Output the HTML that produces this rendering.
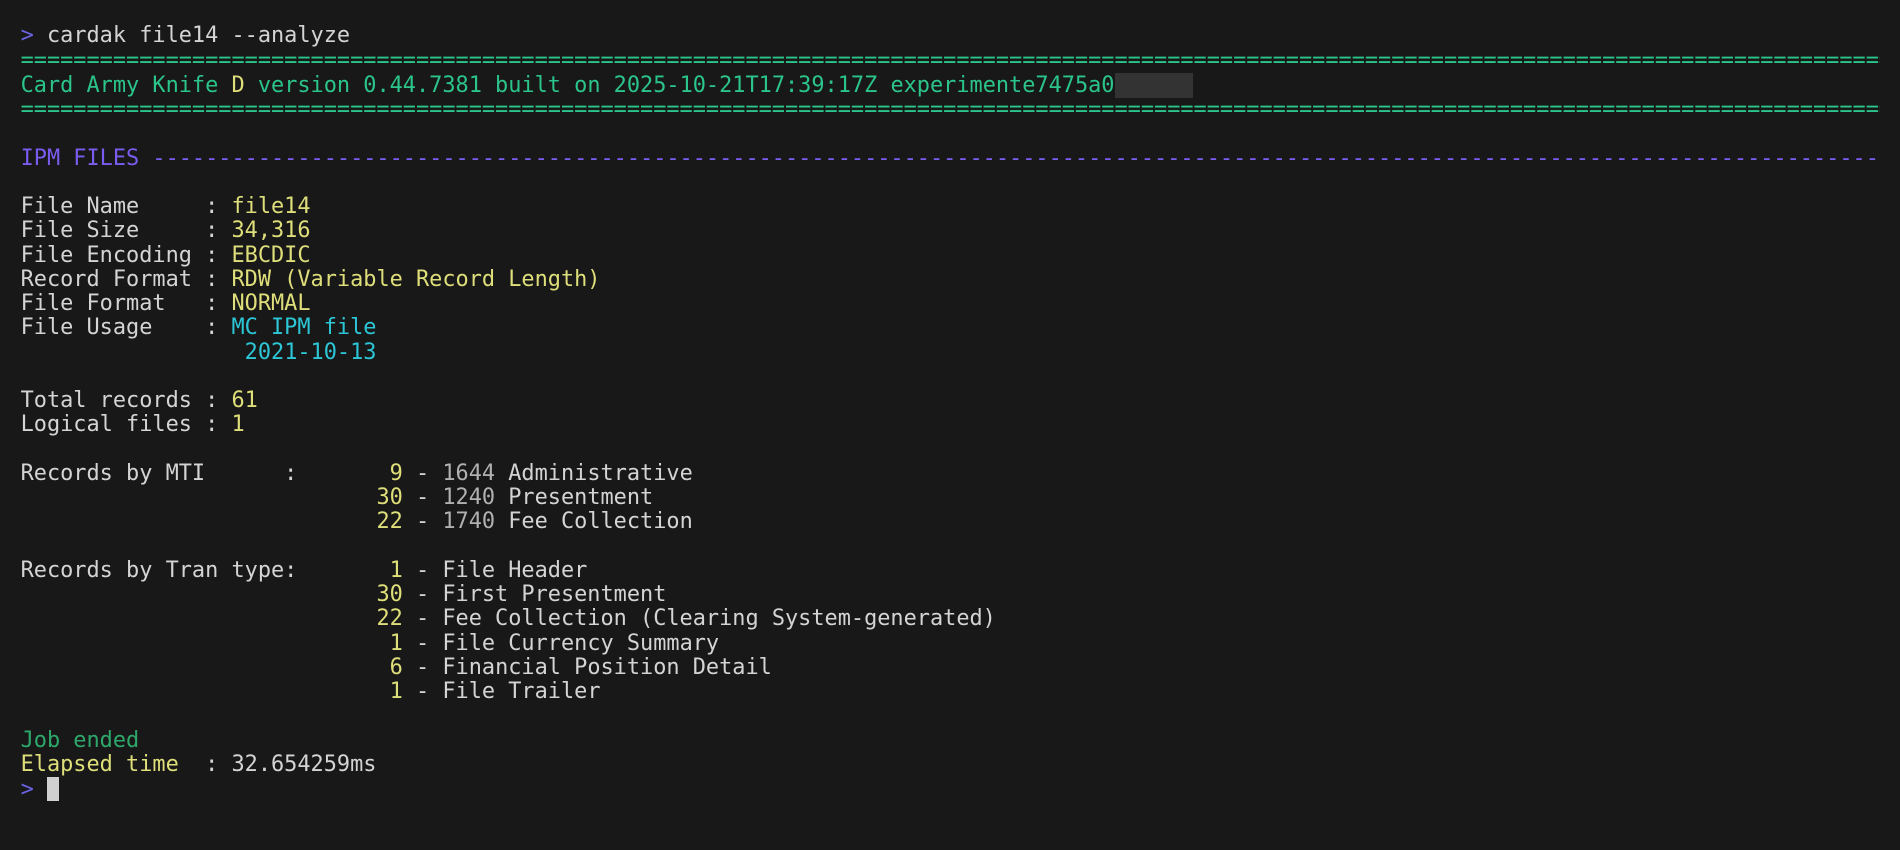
<!DOCTYPE html>
<html><head><meta charset="utf-8"><style>
html,body{margin:0;padding:0;background:#181818;width:1900px;height:850px;overflow:hidden}
pre{margin:0;padding:24.3px 0 0 20.6px;font-family:"DejaVu Sans Mono","Liberation Mono",monospace;font-size:21.9px;line-height:24.25px;color:#d4d4d4;white-space:pre}
.g{color:#2bc48a}.y{color:#dede7a}.p{color:#7b5cf0}.b{color:#6a63e6}.c{color:#2cc6d6}.gr{color:#b0b0b0}.j{color:#2ea86a}
.r{display:inline-block;background:#333;width:78px;height:25px;vertical-align:-6px}
.cur{display:inline-block;background:#d0d0d0;width:12px;height:24px;vertical-align:-5px}
.ln{display:inline-block;width:1859px;overflow:hidden;vertical-align:top}
</style></head><body><pre><span class="b">&gt;</span> cardak file14 --analyze
<span class="g ln">==============================================================================================================================================</span>
<span class="g">Card Army Knife <span class="y">D</span> version 0.44.7381 built on 2025-10-21T17:39:17Z experimente7475a0</span><span class="r"></span>
<span class="g ln">==============================================================================================================================================</span>

<span class="p ln">IPM FILES ------------------------------------------------------------------------------------------------------------------------------------</span>

File Name     : <span class="y">file14</span>
File Size     : <span class="y">34,316</span>
File Encoding : <span class="y">EBCDIC</span>
Record Format : <span class="y">RDW (Variable Record Length)</span>
File Format   : <span class="y">NORMAL</span>
File Usage    : <span class="c">MC IPM file</span>
                 <span class="c">2021-10-13</span>

Total records : <span class="y">61</span>
Logical files : <span class="y">1</span>

Records by MTI      :       <span class="y">9</span> - <span class="gr">1644</span> Administrative
                           <span class="y">30</span> - <span class="gr">1240</span> Presentment
                           <span class="y">22</span> - <span class="gr">1740</span> Fee Collection

Records by Tran type:       <span class="y">1</span> - File Header
                           <span class="y">30</span> - First Presentment
                           <span class="y">22</span> - Fee Collection (Clearing System-generated)
                            <span class="y">1</span> - File Currency Summary
                            <span class="y">6</span> - Financial Position Detail
                            <span class="y">1</span> - File Trailer

<span class="j">Job ended</span>
<span class="y">Elapsed time</span>  : 32.654259ms
<span class="b">&gt;</span> <span class="cur"></span></pre></body></html>
